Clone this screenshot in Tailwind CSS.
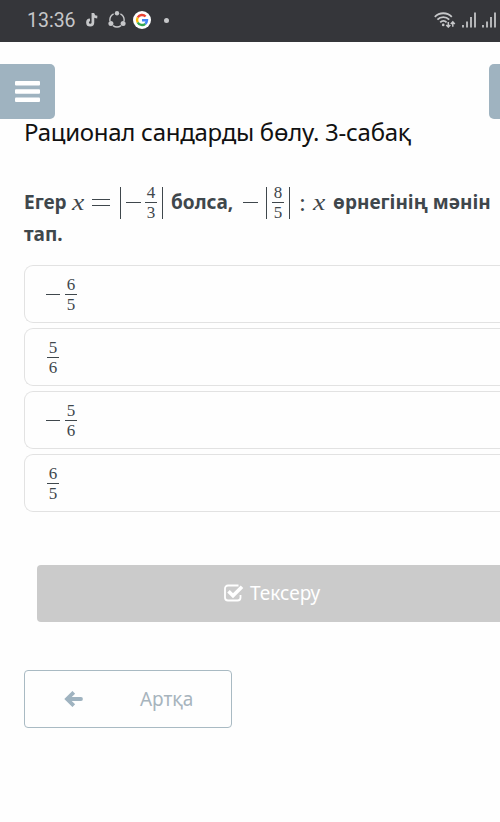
<!DOCTYPE html>
<html lang="kk">

<head>
  <meta charset="UTF-8" />
  <meta name="viewport" content="width=device-width, initial-scale=1.0">
  <title>Рационал сандарды бөлу. 3-сабақ</title>
  <script src="https://cdn.jsdelivr.net/npm/@tailwindcss/browser@4"></script>
</head>

<body class="bg-[#fefefe] h-[822px] overflow-hidden font-['Noto_Sans',sans-serif]">
  <!-- status bar -->
  <header class="h-[42px] bg-[#35363a] flex items-center text-[#c6c7c9]">
    <span class="ml-[27px] w-[59px] font-['Roboto',sans-serif] text-[19.500px] leading-none whitespace-nowrap">13:36</span>
    <svg class="w-3 h-[14px] -mt-0.5" viewBox="0 0 12 14" fill="none" stroke="currentColor" stroke-width="2.7">
      <path d="M6.900 0v9.500a2.700 2.700 0 1 1-2.900-2.700M6.900 .3c.3 2.400 1.800 3.700 4.400 3.900" />
    </svg>
    <svg class="ml-[10px] w-[18px] h-[17px] -mt-[3px]" viewBox="0 0 18 17" fill="none" stroke="currentColor" stroke-width="1.4">
      <path d="M5.600 2.900A7 7 0 0 0 2 10.200M12.400 2.900A7 7 0 0 1 16 10.200M5 14.600a7 7 0 0 0 8 0" />
      <g fill="currentColor" stroke="none">
        <circle cx="9" cy="2.300" r="2.200" /><circle cx="2.900" cy="12.500" r="2.500" /><circle cx="15.100" cy="12.500" r="2.500" />
      </g>
    </svg>
    <svg class="ml-[7px] w-[18px] h-[18px] -mt-[3px]" viewBox="0 0 18 18" fill="none" stroke-width="2.4">
      <circle cx="9" cy="9" r="9" fill="#fff" />
      <path stroke="#ea4335" d="M4.700 6.500A5 5 0 0 1 12.600 5.500" />
      <path stroke="#fbbc05" d="M4.700 11.500a5 5 0 0 1 0-5" />
      <path stroke="#34a853" d="M12.300 12.800a5 5 0 0 1-7.600-1.300" />
      <path stroke="#4285f4" d="M9 9.200h5a5 5 0 0 1-1.700 3.600" />
    </svg>
    <span class="ml-[13px] w-[5px] h-[5px] -mt-0.5 rounded-full bg-[#c6c7c9]"></span>
    <svg class="ml-auto w-[22px] h-4 -mt-[3px]" viewBox="0 0 22 16" fill="none" stroke="currentColor" stroke-width="1.8">
      <path d="M.8 4.800a12 12 0 0 1 17 0M3.400 7.700a8.200 8.200 0 0 1 11.800 0M6.200 10.300a4.600 4.600 0 0 1 6.400 0" />
      <circle cx="9.200" cy="12.900" r="1.300" fill="currentColor" stroke="none" />
      <path stroke-width="1.5" d="M14.300 10v5M12.300 12.900l2 2.100 2-2.100M18.800 14.800v-5M16.800 12l2-2.100 2 2.100" />
    </svg>
    <svg class="ml-1.5 w-[14px] h-4 -mt-0.5 text-[#b4b5b7]" viewBox="0 0 14 16" fill="currentColor">
      <path d="M0 13h2v2.500H0zM4 9.500h2v6H4zM8 5h2v10.500H8zM12 .5h2v15h-2z" />
    </svg>
    <svg class="ml-1.5 mr-1 w-[14px] h-4 -mt-0.5 text-[#b4b5b7]" viewBox="0 0 14 16" fill="currentColor">
      <path d="M0 13h2v2.500H0zM4 9.500h2v6H4zM8 5h2v10.500H8zM12 .5h2v15h-2z" />
    </svg>
  </header>

  <!-- side buttons -->
  <nav class="mt-[22px] h-[55px] flex justify-between">
    <button class="w-[55px] rounded-r-[5px] bg-[#9fb3c0] pl-[15px]">
      <svg class="w-[25px] h-[21px]" viewBox="0 0 25 21" fill="#fff">
        <rect width="25" height="4.4" rx="1" /><rect y="8.3" width="25" height="4.4" rx="1" /><rect y="16.6" width="25" height="4.4" rx="1" />
      </svg>
    </button>
    <button class="w-[11px] rounded-l-[5px] bg-[#9fb3c0]"></button>
  </nav>

  <main class="pl-6 text-[#3f474c]">
    <h1 class="-mt-[3px] h-8 text-[24px] leading-8 text-[#111] whitespace-nowrap tracking-[-0.27px]">Рационал сандарды бөлу. 3-сабақ</h1>

    <!-- question -->
    <div class="mt-[39px] text-[19px] font-bold leading-[31px] whitespace-nowrap">
      <div class="flex h-[31px] items-center">
        <span class="w-12">Егер</span>
        <span class="w-5 origin-left scale-x-115 font-['Liberation_Serif',serif] text-[24px] italic font-normal -mt-px">x</span>
        <span class="w-[18px] h-[7px] border-y border-current"></span>
        <span class="ml-[10px] w-px h-8 bg-current"></span>
        <span class="ml-[5px] w-[15px] h-px bg-current"></span>
        <span class="ml-1 w-3 flex flex-col items-center font-['Liberation_Serif',serif] text-[17px] font-normal leading-[17px]">
          <span>4</span><span class="w-full h-px my-px bg-current"></span><span>3</span>
        </span>
        <span class="ml-[5px] w-px h-8 bg-current"></span>
        <span class="ml-[8px] w-[72px]">болса,</span>
        <span class="w-[15px] h-px bg-current"></span>
        <span class="ml-2 w-px h-8 bg-current"></span>
        <span class="ml-[5px] w-3 flex flex-col items-center font-['Liberation_Serif',serif] text-[17px] font-normal leading-[17px]">
          <span>8</span><span class="w-full h-px my-px bg-current"></span><span>5</span>
        </span>
        <span class="ml-[5px] w-px h-8 bg-current"></span>
        <span class="ml-[9px] w-[14px] font-['Liberation_Serif',serif] text-[25px] font-normal">:</span>
        <span class="w-5 origin-left scale-x-115 font-['Liberation_Serif',serif] text-[24px] italic font-normal -mt-px">x</span>
        <span>өрнегінің мәнін</span>
      </div>
      <div class="mt-px">тап.</div>
    </div>

    <!-- answers -->
    <div class="mt-[15px] flex flex-col gap-[5px] font-['Liberation_Serif',serif] text-[17px] leading-[17px]">
      <div class="h-[58px] flex items-center gap-[5px] rounded-l-[9px] border border-r-0 border-[#e2e2e2] pl-[21px]">
        <span class="w-[14px] h-px bg-current"></span>
        <span class="w-3 flex flex-col items-center"><span>6</span><span class="w-full h-px my-px bg-current"></span><span>5</span></span>
      </div>
      <div class="h-[58px] flex items-center rounded-l-[9px] border border-r-0 border-[#e2e2e2] pl-[22px]">
        <span class="w-3 flex flex-col items-center"><span>5</span><span class="w-full h-px my-px bg-current"></span><span>6</span></span>
      </div>
      <div class="h-[58px] flex items-center gap-[5px] rounded-l-[9px] border border-r-0 border-[#e2e2e2] pl-[21px]">
        <span class="w-[14px] h-px bg-current"></span>
        <span class="w-3 flex flex-col items-center"><span>5</span><span class="w-full h-px my-px bg-current"></span><span>6</span></span>
      </div>
      <div class="h-[58px] flex items-center rounded-l-[9px] border border-r-0 border-[#e2e2e2] pl-[22px]">
        <span class="w-3 flex flex-col items-center"><span>6</span><span class="w-full h-px my-px bg-current"></span><span>5</span></span>
      </div>
    </div>

    <button class="mt-[53px] ml-[13px] w-[463px] h-[57px] flex items-center rounded-l bg-[#cbcbcb] pl-[187px] text-[19px] text-white">
      <svg class="w-5 h-[18px] -mt-0.5" viewBox="0 0 20 18" fill="none" stroke="#fff">
        <path stroke-width="1.8" d="M14.500 1.500H4A3 3 0 0 0 1 4.500v9A3 3 0 0 0 4 16.500h9.500a3 3 0 0 0 3-3V11" />
        <path stroke-width="3.600" d="M4.500 7.300l4.500 4.500 9-9" />
      </svg>
      <span class="ml-[6px]">Тексеру</span>
    </button>

    <button class="mt-[48px] w-[208px] h-[58px] flex items-center rounded border border-[#a9bac3] pl-[39px] text-[19px] text-[#a7b4bd]">
      <svg class="w-[19px] h-4" viewBox="0 0 19 16" fill="none" stroke="#9fb3c0" stroke-width="3.800" stroke-linecap="round">
        <path stroke-linecap="butt" d="M9.800 1.300L3 8l6.800 6.700" /><path d="M4 8h13" />
      </svg>
      <span class="ml-[57px]">Артқа</span>
    </button>
  </main>
</body>

</html>
